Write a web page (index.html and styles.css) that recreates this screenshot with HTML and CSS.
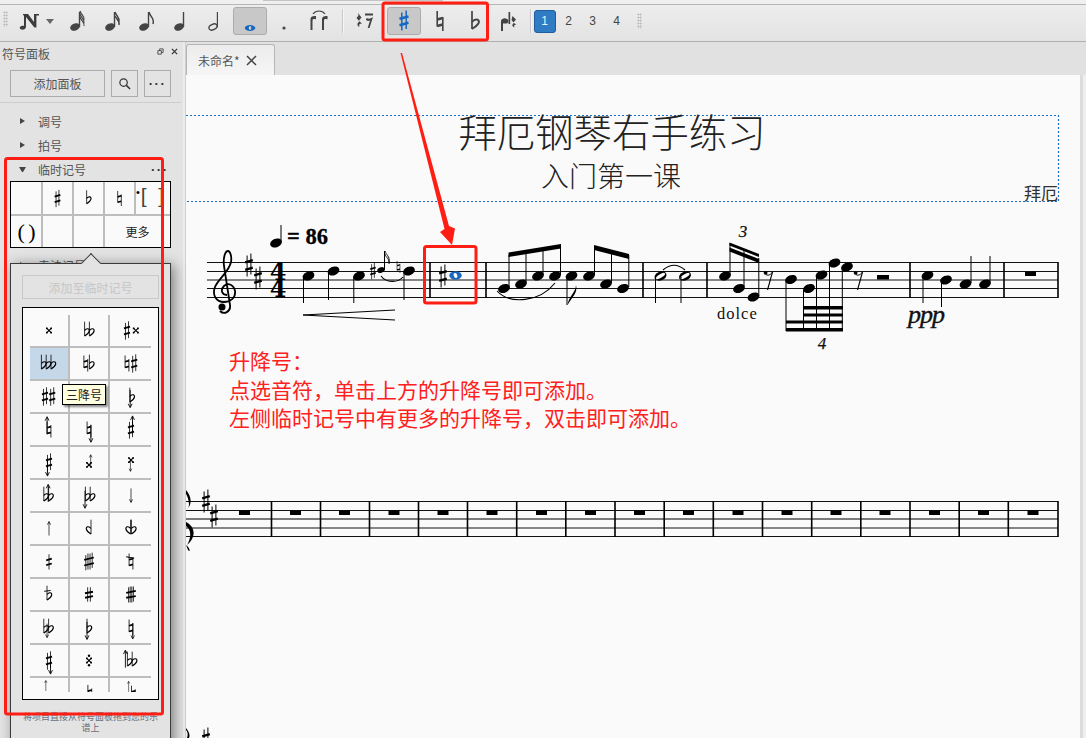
FILE: index.html
```html
<!DOCTYPE html>
<html lang="zh">
<head>
<meta charset="utf-8">
<title>MuseScore</title>
<link rel="stylesheet" href="styles.css">
</head>
<body>
<svg class="sprite" aria-hidden="true">
  <defs>
    <g id="sharp" fill="none" stroke="currentColor">
      <path d="M-1.9-9.5V11.5M1.9-11.5V9.5" stroke-width="1"/>
      <path d="M-3.8-2.6L3.8-4.8M-3.8 4.8L3.8 2.6" stroke-width="2.4"/>
    </g>
    <g id="flat" fill="none" stroke="currentColor">
      <path d="M-2.5-11V7" stroke-width="1"/>
      <path d="M-2.5 0C0-3.5 4-2.5 3.3 .8C2.8 3.5-.2 5.4-2.5 7" stroke-width="1.5"/>
    </g>
    <g id="natural" fill="none" stroke="currentColor">
      <path d="M-2.4-10V5.5M2.4-5.5V10" stroke-width="1"/>
      <path d="M-2.4-2.2L2.4-3.6M-2.4 5L2.4 3.6" stroke-width="2.2"/>
    </g>
    <g id="dbl" fill="none" stroke="currentColor">
      <path d="M-3-3L3 3M3-3L-3 3" stroke-width="1.4"/>
      <path d="M-3.7-3.7h2v2h-2zM1.7-3.7h2v2h-2zM-3.7 1.7h2v2h-2zM1.7 1.7h2v2h-2z" fill="currentColor" stroke="none"/>
    </g>
    <g id="up" fill="none" stroke="currentColor" stroke-width="1.1"><path d="M0 11V-10M-2.4-6L0-11L2.4-6"/></g>
    <g id="down" fill="none" stroke="currentColor" stroke-width="1.1"><path d="M0-11V10M-2.4 6L0 11L2.4 6"/></g>
    <ellipse id="nh" rx="6.1" ry="4.3" transform="rotate(-22)" fill="#000"/>
    <g id="hh"><ellipse rx="6.2" ry="4.3" transform="rotate(-22)" fill="#000"/><ellipse rx="5.2" ry="1.9" transform="rotate(-32)" fill="#fafafa"/></g>
    <g id="rest8" fill="none" stroke="#000">
      <path d="M3.5-5L-1.5 13" stroke-width="1.1"/>
      <path d="M-4-4C-3-1 1-1 3.5-5" stroke-width="1"/>
      <circle cx="-3.4" cy="-4.2" r="1.9" fill="#000" stroke="none"/>
    </g>
    <g id="tnote"><ellipse cx="7" cy="20" rx="5" ry="3.600" transform="rotate(-22 7 20)"/><path d="M10.800 20V5h1.400v15z"/></g>
  </defs>
</svg>

<div class="topstrip"><div class="toptab"></div></div>

<header class="toolbar">
  <span class="grip"></span>
  <span class="nbtn">
    <svg class="nicon" viewBox="0 0 20 18"><path d="M4 2h5l6 8V2h2.4v13.5h-2L7 5v9.5C7 17 4.500 18 2.500 17.600C0 17 .5 14.500 2.500 14C3.500 13.700 4.500 13.800 5 14.100V4.500C5 3.500 4.500 3 4 3z" fill="#3c3c3c"/><path d="M15 2h5v1.500h-5z" fill="#3c3c3c"/></svg>
    <span class="caret"></span>
  </span>
  <button class="tb"><svg class="ti" viewBox="-3 0 24 28"><use href="#tnote"/><path d="M12 4c1 4 5 5 4 9M12 7c1 4 5 5 4 9M12 10c1 4 5 5 4 9" fill="none" stroke="#444" stroke-width="1.200"/></svg></button>
  <button class="tb"><svg class="ti" viewBox="-3 0 24 28"><use href="#tnote"/><path d="M12 5c1 4 5 5 4 10M12 9c1 3 5 4 4 9" fill="none" stroke="#444" stroke-width="1.400"/></svg></button>
  <button class="tb"><svg class="ti" viewBox="-3 0 24 28"><use href="#tnote"/><path d="M12 5c1 5 6 6 4 12" fill="none" stroke="#444" stroke-width="1.500"/></svg></button>
  <button class="tb"><svg class="ti" viewBox="-3 0 24 28"><use href="#tnote"/></svg></button>
  <button class="tb"><svg class="ti" viewBox="-3 0 24 28"><ellipse cx="7" cy="20" rx="4.300" ry="2.700" transform="rotate(-25 7 20)" fill="none" stroke="#444" stroke-width="1.300"/><path d="M10.800 20V5h1.200v15z"/></svg></button>
  <button class="tb on"><svg class="ti" viewBox="0 0 24 28"><ellipse cx="12" cy="21" rx="5.300" ry="2.900" fill="#1668c0"/><ellipse cx="12" cy="21" rx="1.300" ry="1.900" fill="#c8c8c8"/></svg></button>
  <button class="tb"><svg class="ti" viewBox="0 0 24 28"><circle cx="12" cy="21" r="1.600"/></svg></button>
  <button class="tb"><svg class="ti" viewBox="0 0 24 28"><path d="M3.500 23V12C3.500 9.500 6 8.500 9 9V12.500C7.500 11.800 5.500 12 5.500 13.500V23zM15 23V12c0-2.500 2.500-3.500 5.500-3V12.500c-1.500-.7-3.500-.5-3.500 1V23z"/><path d="M6 7C9 3 15 3 18 7" fill="none" stroke="#444" stroke-width="1.200"/></svg></button>
  <span class="sep"></span>
  <button class="tb"><svg class="ti" viewBox="0 0 24 28"><path d="M6 6l3.500 4.500-2.500 3 3 3.500c-2-1-3.500 0-2.500 3-2.500-1-3-4 0-5.500L4.500 11l2-2.500zM13 6.500h8v2h-8zM15 11c1 1 3.500 1 6-1l-3.500 11h-1.800l2.300-7.500c-1.500.8-4 .6-4-1.500z"/></svg></button>
  <button class="tb on acc"><svg class="ti" viewBox="-12 -14 24 28"><path d="M-2.200-8.500V9.500M2.200-10.500V8" fill="none" stroke="#1668c0" stroke-width="1.500"/><path d="M-4.500-2.200L4.500-4.600M-4.500 4.200L4.500 1.800" fill="none" stroke="#1668c0" stroke-width="2.600"/></svg></button>
  <button class="tb nat"><svg class="ti" viewBox="-12 -14 24 28"><path d="M-2.800-10V5.500M2.800-4V10" fill="none" stroke="#444" stroke-width="1.600"/><path d="M-2.800-1.500L2.800-3M-2.800 5L2.800 3.500" fill="none" stroke="#444" stroke-width="2.600"/></svg></button>
  <button class="tb"><svg class="ti" viewBox="-12 -14 24 28"><path d="M-3-10V8" fill="none" stroke="#444" stroke-width="1.700"/><path d="M-3 1C0-3 4.500-2 3.800 1.500C3.300 4-.2 6-3 8" fill="none" stroke="#444" stroke-width="2"/></svg></button>
  <button class="tb"><svg class="ti" viewBox="0 0 24 28"><path d="M4 24V14.500c0-2.500 2-3.500 4.500-3V14c-.8-.4-2.500-.2-2.500 1v9z"/><ellipse cx="8" cy="14" rx="3.400" ry="2.600"/><path d="M11.500 5h1.700v12h-1.700z"/><path d="M15.500 9l3.500 3.500-2.500 3 3 2.500c-2-.5-3 .5-2 2.500-2.500-1-3-3-.5-4.500L14.500 13z"/></svg></button>
  <span class="sep sep-b"></span>
  <div class="voices">
    <button class="voice cur">1</button>
    <button class="voice">2</button>
    <button class="voice">3</button>
    <button class="voice">4</button>
  </div>
  <span class="grip grip-r"></span>
</header>

<div class="body">
  <aside class="sidebar">
    <div class="side-head">
      <span class="side-title">符号面板</span>
      <span class="side-tools">
        <svg class="mini" viewBox="0 0 8 8"><path d="M1 3h4v4H1zM3 3V1h4v4H5" fill="none" stroke="#444" stroke-width="1"/></svg>
        <svg class="mini" viewBox="0 0 8 8"><path d="M1 1l6 6M7 1L1 7" fill="none" stroke="#333" stroke-width="1.400"/></svg>
      </span>
    </div>
    <div class="side-btns">
      <button class="sbtn wide">添加面板</button>
      <button class="sbtn"><svg class="srch" viewBox="0 0 14 14"><circle cx="6" cy="6" r="4" fill="none" stroke="#333" stroke-width="1.300"/><path d="M9 9l4 4" stroke="#333" stroke-width="1.600"/></svg></button>
      <button class="sbtn dots">···</button>
    </div>
    <ul class="plist">
      <li class="pitem"><span class="tri"></span>调号</li>
      <li class="pitem"><span class="tri"></span>拍号</li>
      <li class="pitem"><span class="tri open"></span>临时记号<span class="pmore">···</span></li>
    </ul>
    <div class="mini-grid">
      <div class="mc"></div>
      <div class="mc"><svg class="mg" viewBox="-15.500 -16.500 31 33"><use href="#sharp" transform="scale(.75)"/></svg></div>
      <div class="mc"><svg class="mg" viewBox="-15.500 -16.500 31 33"><use href="#flat" transform="scale(.75)"/></svg></div>
      <div class="mc"><svg class="mg" viewBox="-15.500 -16.500 31 33"><use href="#natural" transform="scale(.75)"/></svg></div>
      <div class="mc mc-last"><span class="brk"><span class="brk-dot">•</span>[&nbsp;&nbsp;]</span></div>
      <div class="mc mc-b"><span class="par">( )</span></div>
      <div class="mc mc-b"></div>
      <div class="mc mc-b"></div>
      <div class="mc mc-b mc-more">更多</div>
    </div>
    <div class="pitem next"><span class="tri"></span>奏法记号</div>

    <div class="popup">
      <span class="pop-arrow"></span>
      <button class="addbtn">添加至临时记号</button>
      <div class="big-wrap">
        <div class="big-grid">
          <div class="c"><svg class="g" viewBox="-25 -20.600 50 41.200"><use href="#dbl"/></svg></div>
          <div class="c"><svg class="g" viewBox="-25 -20.600 50 41.200"><use href="#flat" x="-3"/><use href="#flat" x="3"/></svg></div>
          <div class="c"><svg class="g" viewBox="-25 -20.600 50 41.200"><use href="#sharp" x="-5"/><use href="#dbl" x="6"/></svg></div>

          <div class="c hl"><svg class="g" viewBox="-25 -20.600 50 41.200"><use href="#flat" x="-7"/><use href="#flat" x="-1"/><use href="#flat" x="5"/></svg></div>
          <div class="c"><svg class="g" viewBox="-25 -20.600 50 41.200"><use href="#natural" x="-4"/><use href="#flat" x="3"/></svg></div>
          <div class="c"><svg class="g" viewBox="-25 -20.600 50 41.200"><use href="#natural" x="-5"/><use href="#sharp" x="4"/></svg></div>

          <div class="c"><svg class="g" viewBox="-25 -20.600 50 41.200"><use href="#sharp" x="-5"/><use href="#sharp" x="4"/></svg></div>
          <div class="c"></div>
          <div class="c"><svg class="g" viewBox="-25 -20.600 50 41.200"><use href="#flat" x="1"/><use href="#down" y="3" x="-1"/></svg></div>

          <div class="c"><svg class="g" viewBox="-25 -20.600 50 41.200"><use href="#natural"/><use href="#up" x="-2.400" y="-5"/></svg></div>
          <div class="c"><svg class="g" viewBox="-25 -20.600 50 41.200"><use href="#natural"/><use href="#down" x="2.400" y="5"/></svg></div>
          <div class="c"><svg class="g" viewBox="-25 -20.600 50 41.200"><use href="#sharp"/><use href="#up" x="1.900" y="-6"/></svg></div>

          <div class="c"><svg class="g" viewBox="-25 -20.600 50 41.200"><use href="#sharp"/><use href="#down" x="-1.900" y="6"/></svg></div>
          <div class="c"><svg class="g" viewBox="-25 -20.600 50 41.200"><use href="#dbl" y="3"/><use href="#up" x="3" y="-3" transform="scale(.7)"/></svg></div>
          <div class="c"><svg class="g" viewBox="-25 -20.600 50 41.200"><use href="#dbl" y="-3"/><use href="#down" x="-1" y="5" transform="scale(.7)"/></svg></div>

          <div class="c"><svg class="g" viewBox="-25 -20.600 50 41.200"><use href="#flat" x="-4"/><use href="#flat" x="2"/><use href="#up" x="-1" y="-3"/></svg></div>
          <div class="c"><svg class="g" viewBox="-25 -20.600 50 41.200"><use href="#flat" x="-2"/><use href="#flat" x="4"/><use href="#down" x="-5" y="5"/></svg></div>
          <div class="c"><svg class="g" viewBox="-25 -20.600 50 41.200"><use href="#down" transform="scale(.8)"/></svg></div>

          <div class="c"><svg class="g" viewBox="-25 -20.600 50 41.200"><use href="#up" transform="scale(.8)"/></svg></div>
          <div class="c"><svg class="g" viewBox="-25 -20.600 50 41.200"><use href="#flat" transform="scale(-1 1)"/></svg></div>
          <div class="c"><svg class="g" viewBox="-25 -20.600 50 41.200"><use href="#flat" transform="translate(-3 0) scale(-1 1)"/><use href="#flat" x="3"/></svg></div>

          <div class="c"><svg class="g" viewBox="-25 -20.600 50 41.200"><path d="M0-9V10" stroke="currentColor"/><path d="M-3.500-1.500L3.500-3.500M-3.500 4.500L3.500 2.500" stroke="currentColor" stroke-width="2.200"/></svg></div>
          <div class="c"><svg class="g" viewBox="-25 -20.600 50 41.200"><path d="M-4-8V11M-1.300-10V10M1.300-10V10M4-11V8" stroke="currentColor"/><path d="M-6-2L6-5M-6 5L6 2" stroke="currentColor" stroke-width="2.200"/></svg></div>
          <div class="c"><svg class="g" viewBox="-25 -20.600 50 41.200"><use href="#natural"/><path d="M-6-6L4-4" stroke="currentColor" stroke-width="1.400"/></svg></div>

          <div class="c"><svg class="g" viewBox="-25 -20.600 50 41.200"><use href="#flat"/><path d="M-6-4L2-5" stroke="currentColor" stroke-width="1.200"/></svg></div>
          <div class="c"><svg class="g" viewBox="-25 -20.600 50 41.200"><path d="M-1.700-9V9M1.700-9V9" stroke="currentColor"/><path d="M-5-1.500L5-3.500M-5 4L5 2" stroke="currentColor" stroke-width="2.400"/></svg></div>
          <div class="c"><svg class="g" viewBox="-25 -20.600 50 41.200"><path d="M-3-9V10M-1-10V10M1-10V10M3-10V9" stroke="currentColor"/><path d="M-6-2L6-4.500M-6 4L6 2" stroke="currentColor" stroke-width="2.400"/></svg></div>

          <div class="c"><svg class="g" viewBox="-25 -20.600 50 41.200"><use href="#flat" x="-4"/><use href="#flat" x="2"/><use href="#down" x="-3" y="5" transform="scale(.8)"/></svg></div>
          <div class="c"><svg class="g" viewBox="-25 -20.600 50 41.200"><use href="#flat"/><use href="#down" x="-2.500" y="4"/></svg></div>
          <div class="c"><svg class="g" viewBox="-25 -20.600 50 41.200"><use href="#natural"/><use href="#down" x="2.400" y="5" transform="scale(.9)"/></svg></div>

          <div class="c"><svg class="g" viewBox="-25 -20.600 50 41.200"><use href="#sharp"/><use href="#down" x="1.900" y="6"/></svg></div>
          <div class="c"><svg class="g" viewBox="-25 -20.600 50 41.200"><use href="#dbl"/><circle cy="-6" r="1.500" fill="currentColor"/><circle cy="6" r="1.500" fill="currentColor"/></svg></div>
          <div class="c"><svg class="g" viewBox="-25 -20.600 50 41.200"><use href="#flat" x="-2"/><use href="#flat" x="4"/><use href="#up" x="-7" y="-2"/></svg></div>

          <div class="c c-cut"><svg class="g" viewBox="-25 -20.600 50 41.200"><use href="#up" transform="translate(-4 -11) scale(.6)"/></svg></div>
          <div class="c c-cut"><svg class="g" viewBox="-25 -20.600 50 41.200"><use href="#natural" x="1" y="-2"/></svg></div>
          <div class="c c-cut"><svg class="g" viewBox="-25 -20.600 50 41.200"><use href="#natural" x="3" y="-1"/><use href="#up" transform="translate(-3 -10) scale(.6)"/></svg></div>
        </div>
      </div>
      <p class="hint">将项目直接从符号面板拖到您的乐谱上</p>
      <div class="tip">三降号</div>
    </div>
  </aside>
  <span class="split"></span>

  <main class="main">
    <div class="tabbar">
      <div class="tab"><span>未命名*</span><svg class="tabx" viewBox="0 0 11 11"><path d="M1 1l9 9M10 1l-9 9" stroke="#444" stroke-width="1.500"/></svg></div>
    </div>
    <div class="score-row">
      <svg class="score" viewBox="186 75 894 663" preserveAspectRatio="xMinYMin">
        <!-- title frame -->
        <path d="M186 115.500H1058.500V201.500H186" class="frame"/>
        <text x="612" y="147" text-anchor="middle" class="t-title">拜厄钢琴右手练习</text>
        <text x="611" y="187" text-anchor="middle" class="t-sub">入门第一课</text>
        <text x="1024" y="200" class="t-comp">拜厄</text>

        <!-- staff 1 -->
        <path class="ln" d="M207 262.500H1058M207 271.500H1058M207 280H1058M207 288.500H1058M207 297.500H1058"/>
        <path class="bar" d="M430 262V298M486 262V298M643 262V298M707 262V298M910 262V298M1004 262V298M1058 262V298"/>
        <!-- clef -->
        <path class="clef" d="M227 295C222 295 220 290 224 286C228 282 234 285 235 291C236 298 230 302 224 302C216 302 212 295 215 287C218 279 229 272 231 262C232 256 230 251 228 251C225 251 223 258 224 266L230 305C231 312 224 315 220 311"/>
        <circle cx="222" cy="307" r="3.500"/>
        <use href="#sharp" transform="translate(249 265)" class="blk"/>
        <use href="#sharp" transform="translate(258 278)" class="blk"/>
        <text text-anchor="middle" class="t-time"><tspan x="278" y="279.500">4</tspan><tspan x="278" y="297">4</tspan></text>
        <!-- tempo -->
        <use href="#nh" x="276" y="243"/>
        <path class="st" d="M281 242V225"/>
        <text x="287" y="244" class="t-tempo">= 86</text>
        <!-- m1 -->
        <use href="#nh" x="308.500" y="276"/><use href="#nh" x="333.500" y="271"/><use href="#nh" x="359" y="276"/><use href="#nh" x="409" y="271"/>
        <path class="st" d="M303.500 277V303M328.500 272V300M353.800 277V303M404 272V300"/>
        <use href="#sharp" transform="translate(373 271) scale(.72)" class="blk"/>
        <ellipse cx="381" cy="270" rx="3.800" ry="2.800" transform="rotate(-22 381 270)"/>
        <path class="st" d="M384.500 270V251"/>
        <path d="M385 251c1 4 5 5 4 11M385 254c1 4 5 5 4 10" fill="none" stroke="#000" stroke-width=".9"/>
        <use href="#natural" transform="translate(398.500 267) scale(.6)" class="blk"/>
        <path d="M381 276C386 283 398 283 403 277" class="thin"/>
        <path d="M303 315L395 310M303 315L395 320" class="st"/>
        <!-- m2 -->
        <use href="#sharp" transform="translate(443 276)" class="blk"/>
        <ellipse cx="455.500" cy="275.500" rx="6.200" ry="4.200" fill="#1668c0"/>
        <ellipse cx="455.500" cy="275.500" rx="1.800" ry="2.600" fill="#fafafa" transform="rotate(-20 455.500 275.500)"/>
        <!-- m3 -->
        <use href="#nh" x="504" y="288.500"/><use href="#nh" x="521" y="284"/><use href="#nh" x="538" y="276"/><use href="#nh" x="555" y="276"/>
        <path class="st" d="M509 287V255M526 283V252M543 275V249M560.500 275V246"/>
        <path d="M508.500 252.500L561 244V248.500L508.500 257z"/>
        <path d="M497 291C510 305 540 302 555 283" class="thin"/>
        <use href="#nh" x="571.500" y="276"/>
        <path class="st" d="M567 277V305"/>
        <path d="M567.500 305C569 296 576 292 576 285C578 293 572 297 567.500 305z"/>
        <use href="#nh" x="589" y="276"/><use href="#nh" x="606" y="284"/><use href="#nh" x="623" y="288.500"/>
        <path class="st" d="M594.500 275V246M611.500 283V251M628.800 287V255"/>
        <path d="M594 245L629 254V259L594 250z"/>
        <!-- m4 -->
        <use href="#hh" x="660.500" y="276"/><use href="#hh" x="685" y="276"/>
        <path class="st" d="M655.500 277V303M681 277V303"/>
        <path d="M663 270C670 264 678 264 685 270" class="thin"/>
        <!-- m5 -->
        <use href="#nh" x="725" y="276"/><use href="#nh" x="739" y="288.500"/><use href="#nh" x="753.500" y="297"/>
        <path class="st" d="M730 275V243M744 287V250M758.800 296V258"/>
        <path d="M729.500 242.500L759 254V257L729.500 245.500zM729.500 247.500L759 259V263L729.500 251.500z"/>
        <text x="743" y="237" text-anchor="middle" class="t-tup">3</text>
        <text x="717" y="319" class="t-dolce">dolce</text>
        <use href="#rest8" x="769" y="277"/>
        <use href="#nh" x="791" y="279.500"/><use href="#nh" x="809" y="288.500"/><use href="#nh" x="821.500" y="275"/><use href="#nh" x="834.500" y="263"/><use href="#nh" x="847" y="267"/>
        <path class="st" d="M786 281V331M803.500 290V331M816.500 276V331M829.500 264V331M842.300 268V331"/>
        <path d="M786 320.500H843V323.500H786zM786 328H843V331.500H786zM803 306H843V309.500H803zM803 313.500H843V316.500H803z"/>
        <text x="822" y="349" text-anchor="middle" class="t-tup">4</text>
        <use href="#rest8" x="859" y="277"/>
        <rect x="877" y="275" width="12" height="4.500"/>
        <!-- m6 -->
        <use href="#nh" x="927.500" y="275.500"/><use href="#nh" x="946" y="280"/><use href="#nh" x="965.500" y="284"/><use href="#nh" x="985" y="284"/>
        <path class="st" d="M923 277V303M941.500 281V307M971 283V256M990 283V256"/>
        <text x="908" y="323" class="t-ppp">ppp</text>
        <rect x="1025" y="271.500" width="11" height="4.500"/>

        <!-- annotation text -->
        <text x="229" y="369" class="t-note">升降号：</text>
        <text x="229" y="398" class="t-note">点选音符，单击上方的升降号即可添加。</text>
        <text x="229" y="426" class="t-note">左侧临时记号中有更多的升降号，双击即可添加。</text>

        <!-- staff 2 -->
        <path class="ln" d="M186 501.500H1058M186 510.500H1058M186 519H1058M186 528H1058M186 536.500H1058"/>
        <path class="ln gr" d="M186 519H1058"/>
        <path class="bar" d="M271.500 501V537M320.500 501V537M369.500 501V537M418.500 501V537M467.500 501V537M516.700 501V537M565.800 501V537M615 501V537M664.200 501V537M713.300 501V537M762.500 501V537M811.700 501V537M860.800 501V537M910 501V537M959.200 501V537M1008.300 501V537M1058 501V537"/>
        <path d="M186 490C192 497 192 504 187 510C191 506 188 497 186 494zM186 522C196 527 196 538 187 545C191 538 192 530 186 526zM186 545C191 549 190 553 188 550z"/>
        <use href="#sharp" transform="translate(206 501)" class="blk"/>
        <use href="#sharp" transform="translate(214 516)" class="blk"/>
        <g>
          <rect x="239" y="510.500" width="11" height="4.500"/><rect x="290" y="510.500" width="11" height="4.500"/><rect x="339" y="510.500" width="11" height="4.500"/><rect x="388.500" y="510.500" width="11" height="4.500"/><rect x="437.500" y="510.500" width="11" height="4.500"/><rect x="486.500" y="510.500" width="11" height="4.500"/><rect x="536" y="510.500" width="11" height="4.500"/><rect x="585" y="510.500" width="11" height="4.500"/><rect x="634" y="510.500" width="11" height="4.500"/><rect x="683" y="510.500" width="11" height="4.500"/><rect x="732.500" y="510.500" width="11" height="4.500"/><rect x="781.500" y="510.500" width="11" height="4.500"/><rect x="830.500" y="510.500" width="11" height="4.500"/><rect x="879.500" y="510.500" width="11" height="4.500"/><rect x="929" y="510.500" width="11" height="4.500"/><rect x="978" y="510.500" width="11" height="4.500"/><rect x="1027.500" y="510.500" width="11" height="4.500"/>
        </g>
        <!-- next system, cut off by the window -->
        <path d="M186 728C190 733 190 736 189 738H187C188 735 188 732 186 730z"/>
        <use href="#sharp" transform="translate(206 739)" class="blk"/>
      </svg>
      <div class="vstrip"></div>
    </div>
  </main>
</div>

<svg class="marks" viewBox="0 0 1086 738" aria-hidden="true">
  <rect x="383" y="3" width="104.500" height="37" rx="2" class="mk"/>
  <rect x="5.500" y="158.500" width="157" height="555.500" rx="2" class="mk"/>
  <rect x="424.500" y="246.500" width="51.500" height="56.500" rx="2" class="mk"/>
  <path d="M400.500 53L402 53L449 226L455 228.500L452 245L440 232L444.500 229z" class="mkf"/>
</svg>
</body>
</html>
```

FILE: styles.css
```css
* { box-sizing: border-box; }
html, body { margin: 0; height: 100%; }
body {
  width: 1086px;
  height: 738px;
  overflow: hidden;
  position: relative;
  display: flex;
  flex-direction: column;
  background: #e3e3e3;
  color: #444;
  font-family: "Noto Sans CJK SC", "Noto Sans", sans-serif;
  font-size: 12px;
}
button { font-family: inherit; }
.sprite { position: absolute; width: 0; height: 0; }

.topstrip { height: 4px; background: #efefef; flex: none; }
.toptab { width: 180px; height: 1px; margin-left: 263px; background: #c4c4c4; }

.toolbar {
  flex: none;
  height: 38px;
  display: flex;
  align-items: center;
  padding-left: 3px;
  border-top: 1px solid #b6b6b6;
  border-bottom: 1px solid #b0b0b0;
  background: linear-gradient(#ededed, #e3e3e3);
}
.grip {
  width: 5px;
  height: 16px;
  margin-top: -9px;
  background-image: radial-gradient(#b4b4b4 .7px, transparent 1px);
  background-size: 2.5px 3px;
}
.grip-r { margin: -4px 0 0 9px; height: 16px; }
.nbtn { width: 52px; display: flex; align-items: center; padding-left: 11px; height: 28px; }
.nicon { width: 20px; height: 18px; margin-top: -4px; }
.caret {
  margin: -4px 0 0 7px;
  border-left: 4.5px solid transparent;
  border-right: 4.5px solid transparent;
  border-top: 5px solid #666;
}
.tb {
  width: 34.5px;
  height: 28px;
  margin-top: -4px;
  padding: 0;
  border: 1px solid transparent;
  border-radius: 3px;
  background: none;
  display: flex;
  align-items: center;
  justify-content: center;
  fill: #444;
  color: #444;
}
.tb.on { background: #c8c8c8; border-color: #acacac; }
.tb.acc { margin-left: 5.5px; width: 34px; }
.tb.nat { margin-left: 2px; }
.ti { width: 24px; height: 28px; flex: none; }
.sep { width: 2px; height: 24px; margin: -4px 3px 0 6px; background: #c8c8c8; border-right: 1px solid #f6f6f6; }
.sep-b { margin: -4px 2px 0 3px; }
.voices { display: flex; gap: 2px; margin-top: -4px; }
.voice {
  width: 22px;
  height: 23px;
  padding: 0;
  border: 1px solid transparent;
  border-radius: 3px;
  background: none;
  color: #444;
  font-family: "Liberation Sans", sans-serif;
  font-size: 12px;
}
.voice.cur { background: #2f7cc4; border-color: #1f5d9c; color: #e8f2fb; }

.body { flex: 1; display: flex; min-height: 0; }
.sidebar { width: 183px; flex: none; position: relative; background: #e3e3e3; }
.split { width: 3px; flex: none; background: #ececec; border-right: 1px solid #cfcfcf; }

.side-head { height: 24px; display: flex; align-items: center; justify-content: space-between; padding: 0 5px 0 2px; }
.side-title { font-size: 12px; color: #555; margin-top: -2px; }
.side-tools { display: flex; gap: 7px; margin-top: -5px; }
.mini { width: 7px; height: 7px; }
.side-btns { display: flex; gap: 6px; padding: 4px 10px 6px 10px; border-bottom: 1px solid #cdcdcd; margin-right: 2px; height: 37px; }
.sbtn {
  width: 27px;
  height: 27px;
  flex: none;
  padding: 0;
  border: 1px solid #ababab;
  background: #e3e3e3;
  display: flex;
  align-items: center;
  justify-content: center;
  color: #555;
  font-size: 12px;
}
.sbtn.wide { width: 95px; }
.dots { font-family: "Liberation Sans", sans-serif; font-size: 13px; color: #333; letter-spacing: 1.5px; font-weight: bold; }
.srch { width: 13px; height: 13px; }
.plist { list-style: none; margin: 6px 0 0; padding: 0; }
.pitem { height: 24px; display: flex; align-items: center; padding-left: 20px; position: relative; color: #555; }
.tri {
  width: 0;
  height: 0;
  margin-right: 13px;
  border-top: 3.5px solid transparent;
  border-bottom: 3.5px solid transparent;
  border-left: 5px solid #444;
}
.tri.open {
  border-left: 3.5px solid transparent;
  border-right: 3.5px solid transparent;
  border-top: 5px solid #444;
  border-bottom: 0;
  margin-right: 12px;
  margin-left: -1px;
  width: 7px;
}
.pmore { position: absolute; left: 151px; font-family: "Liberation Sans", sans-serif; font-size: 13px; font-weight: bold; color: #333; letter-spacing: 1.5px; }
.next { margin-top: 5px; }

.mini-grid {
  width: 161px;
  height: 67px;
  margin-left: 10px;
  display: grid;
  grid-template-columns: 32px 31px 31px 31px 34px;
  grid-template-rows: 34px 31px;
  border: 1px solid #000;
  background: #fafafa;
  color: #000;
}
.mc { border-right: 2px solid #bdbdbd; border-bottom: 2px solid #bdbdbd; display: flex; align-items: center; justify-content: center; overflow: hidden; }
.mc-last { border-right: 0; justify-content: flex-start; }
.mc-b { border-bottom: 0; }
.mc-more { grid-column: span 2; border-right: 0; font-size: 12px; color: #222; }
.mg { width: 31px; height: 33px; flex: none; }
.par { font-family: "Liberation Serif", serif; font-size: 22px; color: #000; letter-spacing: -1px; }
.brk { font-family: "Liberation Sans", sans-serif; font-size: 21px; font-weight: normal; color: #444; white-space: nowrap; margin-top: -4px; }
.brk-dot { font-size: 11px; color: #000; vertical-align: 7px; margin-right: 1px; }

.popup {
  position: absolute;
  left: 10px;
  top: 221px;
  width: 161px;
  height: 500px;
  padding: 11px 11px;
  background: #e3e3e3;
  border: 1px solid #3a3a3a;
  box-shadow: 3px 2px 12px rgba(0, 0, 0, .45);
}
.pop-arrow {
  position: absolute;
  left: 73px;
  top: -8px;
  width: 14px;
  height: 14px;
  background: #e3e3e3;
  border-left: 1px solid #3a3a3a;
  border-top: 1px solid #3a3a3a;
  transform: rotate(45deg);
}
.addbtn {
  display: block;
  position: relative;
  width: 137px;
  height: 24px;
  padding: 0;
  border: 1px solid #c9c9c9;
  background: #e3e3e3;
  color: #c6c6c6;
  font-size: 12px;
}
.big-wrap {
  margin-top: 8px;
  width: 137px;
  height: 393px;
  padding: 7px;
  border: 1px solid #000;
  background: #fafafa;
  overflow: hidden;
}
.big-grid { display: grid; grid-template-columns: 40px 40px 41px; grid-auto-rows: 33px; width: 121px; height: 377px; overflow: hidden; color: #000; }
.c { border-right: 2px solid #bdbdbd; border-bottom: 2px solid #bdbdbd; display: flex; justify-content: center; align-items: center; }
.c:nth-child(3n) { border-right: 0; }
.c.hl { background: #c5d8ea; }
.c-cut { border-bottom: 0; align-items: flex-start; overflow: hidden; }
.g { width: 40px; height: 33px; flex: none; }
.hint { margin: 11px -2px 0; font-size: 9px; line-height: 11px; color: #66707c; text-align: center; }
.tip {
  position: absolute;
  left: 51px;
  top: 120px;
  width: 44px;
  height: 21px;
  display: flex;
  align-items: center;
  justify-content: center;
  background: #ffffe1;
  border: 1px solid #000;
  box-shadow: 2px 2px 2px rgba(0, 0, 0, .45);
  color: #222;
  font-size: 12px;
}

.main { flex: 1; min-width: 0; display: flex; flex-direction: column; }
.tabbar { height: 33px; flex: none; padding-top: 2px; background: #e1e1e1; }
.tab {
  width: 89px;
  height: 31px;
  display: flex;
  align-items: center;
  padding-left: 11px;
  gap: 6px;
  background: linear-gradient(#ececec, #f6f6f6);
  border: 1px solid #b5b5b5;
  border-bottom: 0;
  border-radius: 3px 3px 0 0;
  color: #555;
  font-size: 12px;
}
.tabx { width: 11px; height: 11px; }
.score-row { flex: 1; min-height: 0; display: flex; }
.score { width: 894px; height: 663px; flex: none; background: #fafafa; display: block; }
.vstrip { flex: 1; background: #efefef; border-left: 3px solid #dcdcdc; }

.frame { fill: none; stroke: #1f6fc0; stroke-width: 1.2; stroke-dasharray: 2 2; }
.ln { fill: none; stroke: #111; stroke-width: 1; }
.gr { stroke: #777; stroke-width: 1.6; }
.bar { fill: none; stroke: #000; stroke-width: 1.6; }
.st { fill: none; stroke: #000; stroke-width: 1; }
.thin { fill: none; stroke: #000; stroke-width: 1.1; }
.clef { fill: none; stroke: #000; stroke-width: 1.8; }
.blk { color: #000; }
.t-title { font-size: 38.4px; fill: #222; font-weight: 300; }
.t-sub { font-size: 28px; fill: #222; font-weight: 300; }
.t-comp { font-size: 17px; fill: #333; }
.t-time { font-family: "DejaVu Serif", serif; font-weight: bold; font-size: 24px; fill: #000; }
.t-tempo { font-family: "Liberation Serif", serif; font-weight: bold; font-size: 22.5px; fill: #000; stroke: #000; stroke-width: .3; }
.t-tup { font-family: "Liberation Serif", serif; font-style: italic; font-size: 17px; fill: #111; stroke: #111; stroke-width: .25; }
.t-dolce { font-family: "Liberation Serif", serif; font-size: 16.5px; fill: #111; letter-spacing: 1px; }
.t-ppp { font-family: "Liberation Serif", serif; font-style: italic; font-size: 26px; fill: #111; stroke: #111; stroke-width: .4; letter-spacing: -1px; }
.t-note { font-size: 21px; fill: #ff2020; }

.marks { position: absolute; left: 0; top: 0; width: 1086px; height: 738px; pointer-events: none; }
.mk { fill: none; stroke: #ff1e14; stroke-width: 3; }
.mkf { fill: #ff1e14; }
```
